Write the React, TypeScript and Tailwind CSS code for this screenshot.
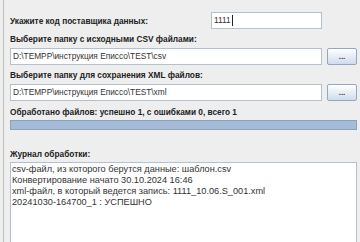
import React from "react";

const font = { fontFamily: '"Liberation Sans", Arial, sans-serif' };

function Btn() {
  return (
    <div className="w-[30px] h-[17px] border border-[#8fa8c4] rounded-[2px] bg-gradient-to-b from-[#ffffff] to-[#cfdcec] flex items-center justify-center text-[8px] leading-none text-[#333] font-bold ml-[5px]">
      ...
    </div>
  );
}

function Field({ value }: { value: string }) {
  return (
    <div className="flex-1 h-[17px] border border-[#b3c0cd] bg-white flex items-center pl-[2px] text-[8.3px] text-[#333] whitespace-nowrap overflow-hidden">
      {value}
    </div>
  );
}

export default function App() {
  const lines = [
    "csv-файл, из которого берутся данные: шаблон.csv",
    "Конвертирование начато 30.10.2024 16:46",
    "xml-файл, в который ведется запись: 1111_10.06.S_001.xml",
    "20241030-164700_1 : УСПЕШНО",
  ];
  return (
    <div className="w-[360px] h-[242px] bg-[#eeeeee] overflow-hidden" style={font}>
      <div className="ml-[3px] border-l border-[#b9c1b9] h-full pl-[6px] pr-[3px] flex flex-col">
        <div className="mt-[12px] h-[17px] flex items-center">
          <div className="w-[201px] text-[8.3px] font-bold text-[#222] leading-[12px]">
            Укажите код поставщика данных:
          </div>
          <div className="w-[111px] h-[17px] border border-[#b3c0cd] bg-white flex items-center pl-[2px] text-[8.3px] text-[#333]">
            1111<span className="inline-block w-px h-[11px] bg-[#222] ml-px" />
          </div>
        </div>
        <div className="mt-[4px] h-[12px] leading-[12px] text-[8.3px] font-bold text-[#222]">
          Выберите папку с исходными CSV файлами:
        </div>
        <div className="mt-[3px] flex">
          <Field value={"D:\\TEMPP\\инструкция Еписсо\\TEST\\csv"} />
          <Btn />
        </div>
        <div className="mt-[4px] h-[12px] leading-[12px] text-[8.3px] font-bold text-[#222]">
          Выберите папку для сохранения XML файлов:
        </div>
        <div className="mt-[3px] flex">
          <Field value={"D:\\TEMPP\\инструкция Еписсо\\TEST\\xml"} />
          <Btn />
        </div>
        <div className="mt-[5px] h-[12px] leading-[12px] text-[8.3px] font-bold text-[#222]">
          Обработано файлов: успешно 1, с ошибками 0, всего 1
        </div>
        <div className="mt-[2px] h-[10px] border border-[#8aa2bf] bg-[#a6bcd6]" />
        <div className="mt-[18px] h-[12px] leading-[12px] text-[8.3px] font-bold text-[#222]">
          Журнал обработки:
        </div>
        <div className="mt-[2px] flex-1 border border-[#b3c0cd] border-b-0 bg-white pt-[1px] pl-[1px]">
          {lines.map((l, i) => (
            <div key={i} className="h-[11px] leading-[11px] text-[9.2px] text-[#333] whitespace-nowrap">
              {l}
            </div>
          ))}
        </div>
      </div>
    </div>
  );
}
